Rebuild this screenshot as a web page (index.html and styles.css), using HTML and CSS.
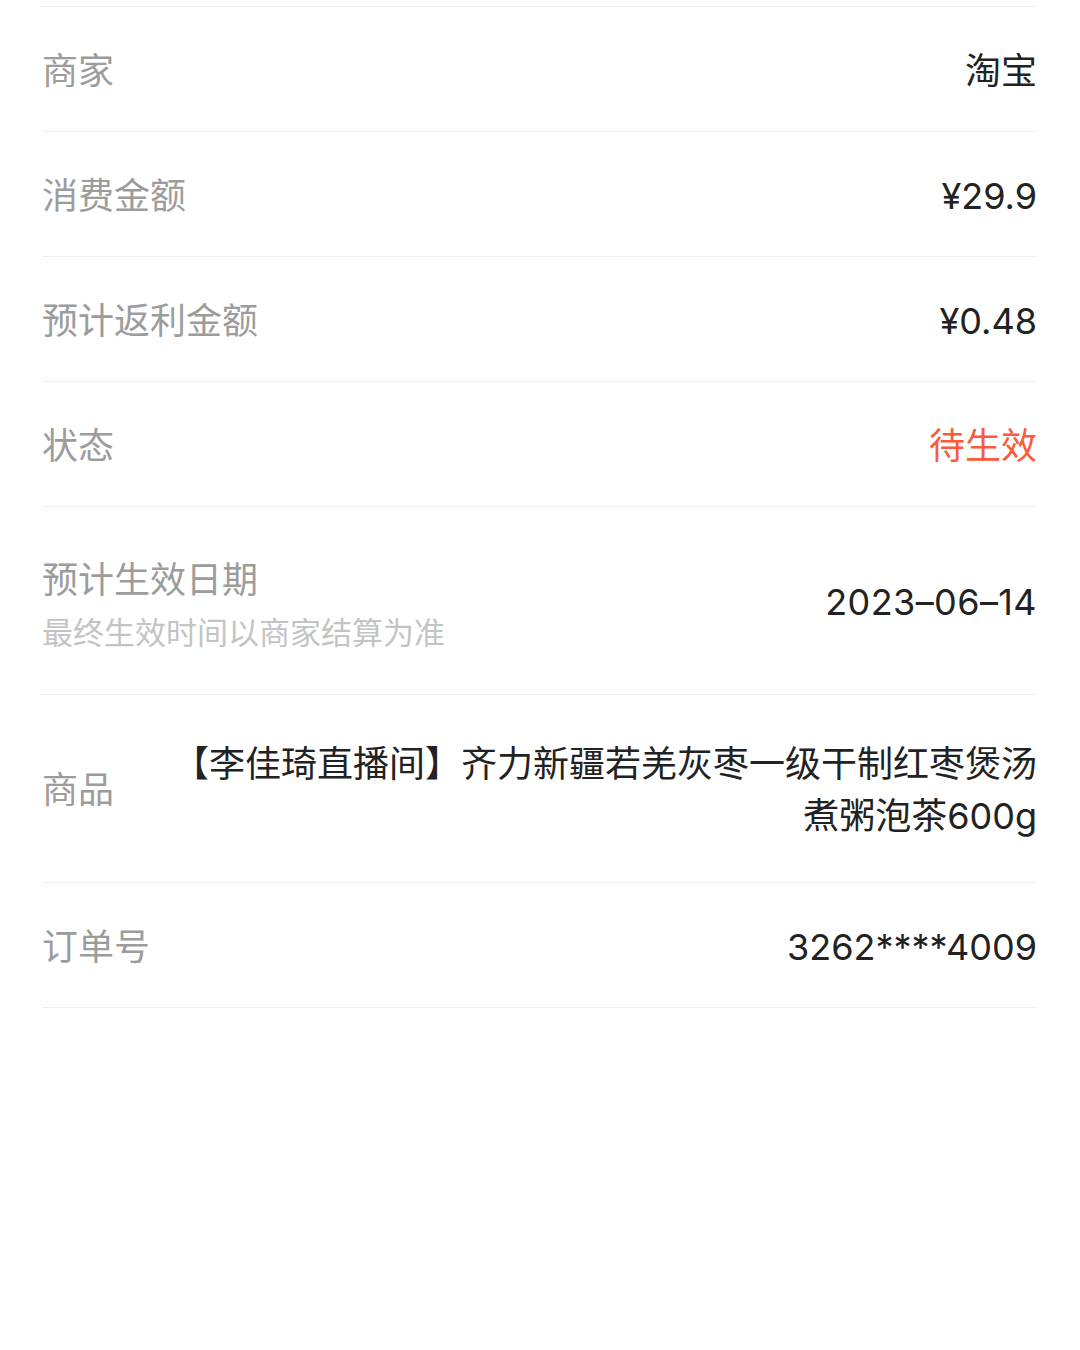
FILE: index.html
```html
<!DOCTYPE html>
<html lang="zh-CN">
<head>
<meta charset="utf-8">
<title>订单详情</title>
<link rel="stylesheet" href="styles.css">
</head>
<body>
<div class="list">
  <div class="row">
    <div class="label">商家</div>
    <div class="value">淘宝</div>
  </div>
  <div class="row">
    <div class="label">消费金额</div>
    <div class="value">¥29.9</div>
  </div>
  <div class="row">
    <div class="label">预计返利金额</div>
    <div class="value">¥0.48</div>
  </div>
  <div class="row">
    <div class="label">状态</div>
    <div class="value status">待生效</div>
  </div>
  <div class="row row-date">
    <div class="label-block">
      <div class="label label-tall">预计生效日期</div>
      <div class="sub">最终生效时间以商家结算为准</div>
    </div>
    <div class="value date">2023–06–14</div>
  </div>
  <div class="row row-product">
    <div class="label">商品</div>
    <div class="value product">【李佳琦直播间】齐力新疆若羌灰枣一级干制红枣煲汤煮粥泡茶600g</div>
  </div>
  <div class="row">
    <div class="label">订单号</div>
    <div class="value">3262****4009</div>
  </div>
</div>
</body>
</html>
```

FILE: styles.css
```css
html, body {
  margin: 0;
  padding: 0;
  background: #ffffff;
}

body {
  font-family: "Inter", "Noto Sans CJK SC", sans-serif;
  font-size: 36px;
  line-height: 52px;
  color: #222222;
  text-spacing-trim: space-all;
}

.list {
  margin: 6px 42px 0 42px;
  width: 995px;
  border-top: 1px solid #efefef;
}

.row {
  display: flex;
  align-items: center;
  justify-content: space-between;
  padding: 38px 0 34px;
  border-bottom: 1px solid #efefef;
}

.label {
  color: #9c9c9c;
  white-space: nowrap;
  flex-shrink: 0;
}

.value {
  color: #222222;
  text-align: right;
}

.status {
  color: #fc5a3d;
}

.date {
  letter-spacing: 0.4px;
}

.row-date {
  padding: 42px 0 39px;
}

.label-block {
  display: flex;
  flex-direction: column;
}

.label-tall {
  line-height: 62px;
}

.sub {
  font-size: 31px;
  line-height: 44px;
  color: #c4c4c4;
  white-space: nowrap;
}

.row-product {
  padding: 43px 0 40px;
}

.product {
  flex: 1;
  margin-left: 56px;
  text-spacing-trim: space-all;
}
```
